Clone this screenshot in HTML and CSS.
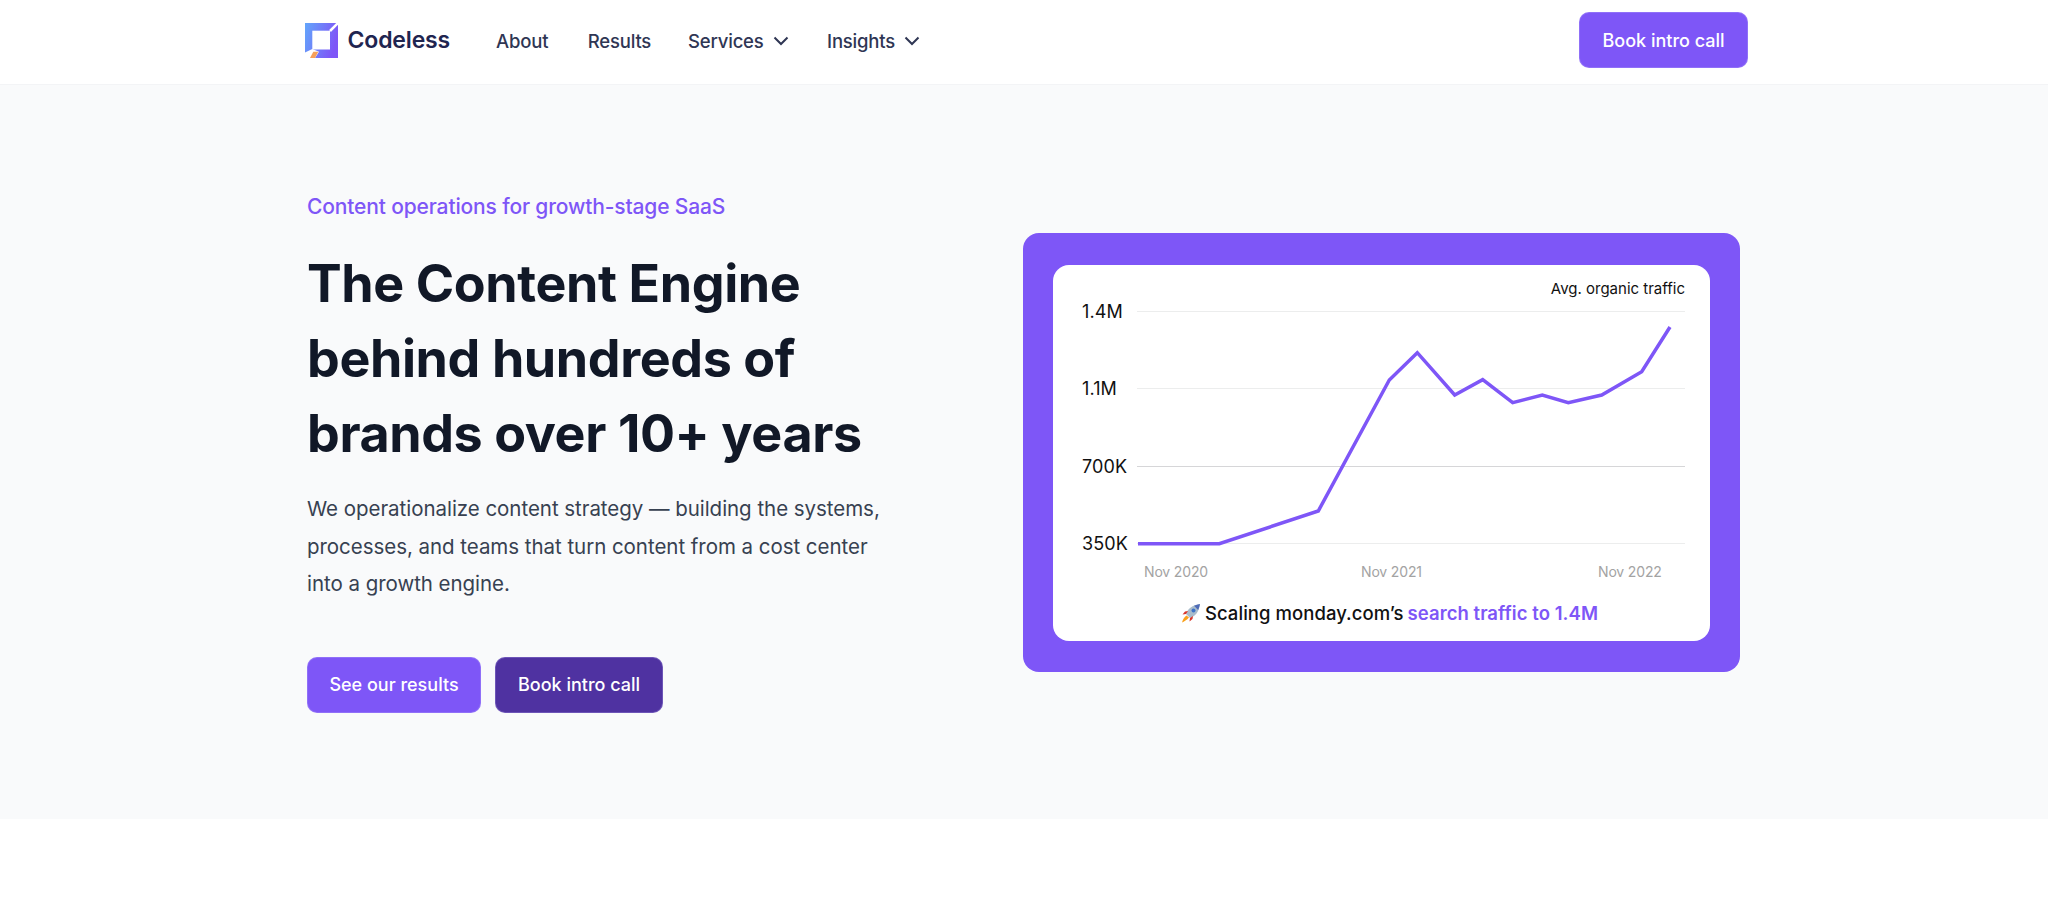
FILE: index.html
```html
<!DOCTYPE html>
<html lang="en">
<head>
<meta charset="utf-8">
<title>Codeless</title>
<link rel="stylesheet" href="styles.css">
</head>
<body>
<header class="site-header">
  <a class="brand" href="#">
    <svg class="brand-mark" viewBox="0 0 33 35" aria-hidden="true">
      <defs>
        <linearGradient id="lg" x1="0" y1="0" x2="1" y2="0.3">
          <stop offset="0" stop-color="#62a6fb"/>
          <stop offset="1" stop-color="#7e56f7"/>
        </linearGradient>
      </defs>
      <path d="M0 0H33V35H0Z" fill="url(#lg)"/>
      <path d="M7.300 7.700H25V26.500H7.300Z" fill="#fff"/>
      <path d="M33.500 -0.500L25 8" stroke="#fff" stroke-width="2.500" fill="none"/>
      <path d="M0 29.500L7.300 26L14 28.700L10 35H0Z" fill="#fff"/>
      <path d="M5 35L8.300 28.700H13.300L10 35Z" fill="#f6a05a"/>
    </svg>
    <span>Codeless</span>
  </a>
  <nav class="main-nav">
    <a href="#" class="nav-first">About</a>
    <a href="#">Results</a>
    <a href="#" class="has-menu">Services
      <svg class="chev" viewBox="0 0 16 10" aria-hidden="true"><path d="M1.500 1.500L8 8L14.500 1.500"/></svg></a>
    <a href="#" class="has-menu">Insights
      <svg class="chev" viewBox="0 0 16 10" aria-hidden="true"><path d="M1.500 1.500L8 8L14.500 1.500"/></svg></a>
  </nav>
  <a class="btn btn-primary btn-nav" href="#">Book intro call</a>
</header>
<main class="hero">
  <section class="hero-copy">
    <p class="eyebrow">Content operations for growth-stage SaaS</p>
    <h1>The Content Engine behind hundreds of brands over 10+ years</h1>
    <p class="lede">We operationalize content strategy — building the systems, processes, and teams that turn content from a cost center into a growth engine.</p>
    <div class="actions">
      <a class="btn btn-primary" href="#">See our results</a>
      <a class="btn btn-dark" href="#">Book intro call</a>
    </div>
  </section>
  <section class="chart-frame">
    <div class="chart-card">
      <svg class="chart" viewBox="0 0 657 330" aria-label="Avg. organic traffic chart">
        <text class="chart-title" x="632" y="29" text-anchor="end">Avg. organic traffic</text>
        <g class="grid">
          <line x1="84" x2="632" y1="46.500" y2="46.500"/>
          <line x1="84" x2="632" y1="123.500" y2="123.500"/>
          <line class="grid-strong" x1="84" x2="632" y1="201.500" y2="201.500"/>
          <line x1="84" x2="632" y1="278.500" y2="278.500"/>
        </g>
        <g class="y-axis">
          <text x="29" y="53">1.4M</text>
          <text x="29" y="130">1.1M</text>
          <text x="29" y="208">700K</text>
          <text x="29" y="285">350K</text>
        </g>
        <g class="x-axis">
          <text x="91" y="312">Nov 2020</text>
          <text x="308" y="312">Nov 2021</text>
          <text x="545" y="312">Nov 2022</text>
        </g>
        <polyline class="trend" points="85,278.700 166.300,278.700 265.300,246 336.300,115 364.300,87.700 401.700,130 429.700,114.700 459.700,137.700 489.300,130 515.300,137.700 548.700,130 588.700,106.700 617,62"/>
      </svg>
      <p class="caption">
        <svg class="rocket" viewBox="0 0 20 20" aria-hidden="true">
          <path d="M5 11C7 5 12 2 19 1C18 8 15 13 9 15Z" fill="#a9bccb"/>
          <path d="M13 2.800C15 2 17 1.400 19 1C18.600 3 18 5 17.200 7Z" fill="#4f6bb8"/>
          <circle cx="12.500" cy="7.500" r="2" fill="#3f74c8"/>
          <path d="M5 11L1.500 11.500L4 8.500L7 8Z" fill="#d8352a"/>
          <path d="M9 15L8.500 18.500L11.500 16L12 13Z" fill="#d8352a"/>
          <path d="M5.500 12.500L8 14.500C6 17 3 18.500 1 19.500C1.500 17 3 14.500 5.500 12.500Z" fill="#f9a11b"/>
        </svg>
        <span>Scaling monday.com’s</span> <strong>search traffic to 1.4M</strong>
      </p>
    </div>
  </section>
</main>
</body>
</html>
```
FILE: styles.css
```css
* { box-sizing: border-box; }
html, body { margin: 0; padding: 0; }
body {
  font-family: Inter, "Noto Sans", "Liberation Sans", sans-serif;
  background: #fff;
  color: #111827;
  min-height: 907px;
}
a { text-decoration: none; color: inherit; }

.site-header {
  height: 85px;
  display: flex;
  align-items: center;
  padding: 0 300px 4px 305px;
  background: #fff;
  border-bottom: 1px solid #f3f4f6;
}
.brand {
  display: flex;
  align-items: center;
  gap: 9.500px;
  font-size: 23px;
  font-weight: 600;
  letter-spacing: -0.15px;
  color: #1f2550;
}
.brand-mark { width: 33px; height: 35px; display: block; }
.main-nav {
  display: flex;
  align-items: center;
  gap: 37px;
  margin: 1px 0 0 46px;
  font-size: 18.500px;
  font-weight: 500;
  letter-spacing: -0.2px;
  color: #2f3654;
}
.nav-first { margin-right: 2.500px; }
.has-menu { display: flex; align-items: center; gap: 9px; }
.has-menu + .has-menu { margin-left: 1.500px; }
.chev { width: 16px; height: 10px; fill: none; stroke: #2f3654; stroke-width: 2; }

.btn {
  display: flex;
  align-items: center;
  justify-content: center;
  height: 56px;
  border-radius: 10px;
  font-size: 18px;
  font-weight: 500;
  letter-spacing: 0;
  color: #fff;
  border: 1px solid rgba(199, 190, 250, 0.25);
}
.btn-primary { background: #7e56f7; }
.btn-dark { background: #4f32a1; width: 168px; }
.btn-nav { margin-left: auto; width: 169px; }

.hero {
  height: 734px;
  background: #f9fafb;
  display: flex;
  align-items: center;
  padding-left: 307px;
}
.hero-copy { width: 716px; padding-top: 2px; }
.eyebrow {
  margin: 0 0 25px;
  font-size: 21px;
  line-height: 28px;
  font-weight: 500;
  letter-spacing: -0.15px;
  color: #7e56f7;
}
h1 {
  margin: 0 0 19px;
  width: 560px;
  font-size: 52px;
  line-height: 75px;
  font-weight: 700;
  letter-spacing: -0.4px;
  color: #111827;
}
.lede {
  margin: 0 0 54px;
  width: 590px;
  font-size: 20.500px;
  line-height: 37.500px;
  letter-spacing: -0.04px;
  color: #374151;
}
.actions { display: flex; gap: 14px; }
.actions .btn-primary { width: 174px; }

.chart-frame {
  width: 717px;
  height: 439px;
  padding: 32px 30px 31px;
  background: #7e56f7;
  border-radius: 16px;
}
.chart-card {
  height: 376px;
  background: #fff;
  border-radius: 16px;
  overflow: hidden;
}
.chart { display: block; width: 657px; height: 330px; }
.chart text { font-family: Inter, "Noto Sans", sans-serif; }
.chart-title { font-size: 15px; font-weight: 400; letter-spacing: 0; fill: #111; }
.grid line { stroke: #eceded; stroke-width: 1; }
.grid .grid-strong { stroke: #d6d6d8; }
.y-axis text { font-size: 18px; letter-spacing: 0.1px; fill: #111; }
.x-axis text { font-size: 14px; letter-spacing: -0.15px; fill: #a3a3a3; }
.trend { fill: none; stroke: #7e56f7; stroke-width: 3.500; stroke-linejoin: miter; }
.caption {
  margin: 3px 0 0;
  padding-left: 16px;
  display: flex;
  justify-content: center;
  align-items: center;
  gap: 4px;
  font-size: 18.500px;
  line-height: 30px;
  font-weight: 500;
  letter-spacing: 0.05px;
  color: #111;
}
.caption strong { font-weight: 600; color: #7e56f7; }
.rocket { width: 20px; height: 20px; }
```
